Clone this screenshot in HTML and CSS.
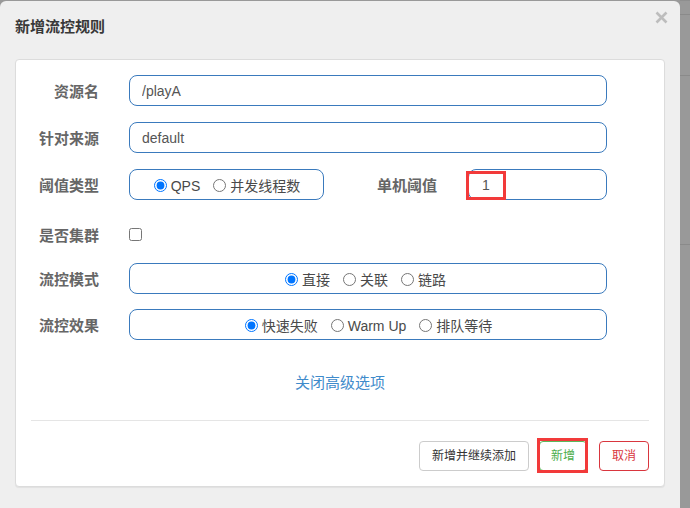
FILE: index.html
```html
<!DOCTYPE html>
<html lang="zh">
<head>
<meta charset="utf-8">
<title>新增流控规则</title>
<link rel="stylesheet" href="styles.css">
</head>
<body>
<div class="screen">
  <div class="modal">
    <div class="modal-header">
      <h4 class="modal-title">新增流控规则</h4>
      <span class="close" aria-label="关闭">
        <svg width="13" height="13" viewBox="0 0 13 13"><path d="M1.5 1.5 L11.5 11.5 M11.5 1.5 L1.5 11.5" stroke="#bdbdbd" stroke-width="2.6" stroke-linecap="butt"/></svg>
      </span>
    </div>
    <div class="panel">
      <form class="form">
        <div class="row">
          <label class="lbl">资源名</label>
          <input class="field" type="text" value="/playA">
        </div>
        <div class="row">
          <label class="lbl">针对来源</label>
          <input class="field" type="text" value="default">
        </div>
        <div class="row">
          <label class="lbl">阈值类型</label>
          <div class="group group-small">
            <label class="radio"><input type="radio" name="grade" checked>QPS</label>
            <label class="radio"><input type="radio" name="grade">并发线程数</label>
          </div>
          <label class="lbl lbl-mid">单机阈值</label>
          <div class="field-wrap">
            <input class="field" type="text" value="1">
            <span class="mark mark-input"></span>
          </div>
        </div>
        <div class="row row-check">
          <label class="lbl">是否集群</label>
          <input class="check" type="checkbox">
        </div>
        <div class="row row-tight">
          <label class="lbl">流控模式</label>
          <div class="group group-wide group-left">
            <label class="radio"><input type="radio" name="strategy" checked>直接</label>
            <label class="radio"><input type="radio" name="strategy">关联</label>
            <label class="radio"><input type="radio" name="strategy">链路</label>
          </div>
        </div>
        <div class="row">
          <label class="lbl">流控效果</label>
          <div class="group group-wide">
            <label class="radio"><input type="radio" name="behavior" checked>快速失败</label>
            <label class="radio"><input type="radio" name="behavior">Warm Up</label>
            <label class="radio"><input type="radio" name="behavior">排队等待</label>
          </div>
        </div>
      </form>
      <div class="toggle"><a class="toggle-link">关闭高级选项</a></div>
      <div class="divider"></div>
      <div class="footer">
        <button class="btn btn-default" type="button">新增并继续添加</button>
        <span class="btn-wrap">
          <button class="btn btn-success" type="button">新增</button>
          <span class="mark mark-btn"></span>
        </span>
        <button class="btn btn-danger" type="button">取消</button>
      </div>
    </div>
  </div>
  <div class="backdrop">
    <div class="bd-row bd-r1"></div>
    <div class="bd-row bd-r2"></div>
    <div class="bd-row bd-r3"></div>
  </div>
</div>
</body>
</html>
```

FILE: styles.css
```css
* { box-sizing: border-box; }

html, body {
  margin: 0;
  padding: 0;
  width: 690px;
  height: 508px;
  overflow: hidden;
  background: #999999;
  font-family: "Liberation Sans", "Noto Sans CJK SC", sans-serif;
  font-size: 14px;
  color: #333;
}

.screen {
  display: flex;
  width: 690px;
  height: 508px;
}

.modal {
  width: 680px;
  flex: none;
  margin-top: 1px;
  height: 507px;
  background: #efefef;
  border-radius: 6px 6px 0 0;
}

.modal-header {
  display: flex;
  justify-content: space-between;
  align-items: flex-start;
  height: 58px;
  padding: 0 12px 0 15px;
}

.modal-title {
  margin: 17px 0 0 0;
  font-size: 15px;
  line-height: 18px;
  font-weight: bold;
  color: #383838;
}

.close {
  display: block;
  margin-top: 10px;
  width: 13px;
  height: 13px;
}
.close svg { display: block; }

.panel {
  width: 650px;
  margin-left: 15px;
  background: #fff;
  border: 1px solid #dcdcdc;
  border-radius: 4px;
  box-shadow: 0 1px 1px rgba(0,0,0,0.06);
  padding-bottom: 15px;
}

.form {
  padding: 15px 57px 0 0;
  margin: 0;
}

.row {
  display: flex;
  align-items: center;
  height: 31px;
  margin-bottom: 16px;
}
.row-tight { margin-bottom: 15px; }
.row:last-child { margin-bottom: 0; }

.lbl {
  width: 83px;
  flex: none;
  margin-right: 30px;
  text-align: right;
  font-size: 15px;
  font-weight: bold;
  color: #666;
  line-height: 20px;
  padding-top: 2px;
}

.lbl-mid {
  width: 113px;
  margin-right: 31px;
}

.field {
  flex: 1;
  min-width: 0;
  height: 31px;
  border: 1px solid #3a7abd;
  border-radius: 8px;
  padding: 0 12px;
  font-family: "Liberation Sans", "Noto Sans CJK SC", sans-serif;
  font-size: 14px;
  color: #555;
  background: #fff;
  outline: none;
}

.field-wrap {
  flex: 1;
  display: flex;
  position: relative;
  height: 31px;
}
.field-wrap .field { width: 100%; padding-left: 13px; }

.group {
  height: 31px;
  border: 1px solid #3a7abd;
  border-radius: 8px;
  display: flex;
  align-items: center;
  justify-content: center;
  background: #fff;
  padding-top: 2px;
}
.group-small { width: 195px; flex: none; }
.group-wide { flex: 1; }
.group-left { padding-right: 6px; }

.radio {
  display: inline-flex;
  align-items: center;
  font-size: 14px;
  color: #4a4a4a;
  margin: 0 6px 0 7px;
  line-height: 20px;
}
.radio input {
  width: 13px;
  height: 13px;
  margin: 0 4px 0 0;
}

.row-check {
  padding-top: 6px;
}
.check {
  width: 13px;
  height: 13px;
  margin: 0;
}

.toggle {
  text-align: center;
  margin-top: 33px;
  line-height: 20px;
}
.toggle-link {
  font-size: 15px;
  color: #3f8bcb;
  cursor: pointer;
}

.divider {
  height: 1px;
  background: #e5e5e5;
  margin: 27px 15px 0 15px;
}

.footer {
  display: flex;
  justify-content: flex-end;
  align-items: center;
  padding: 20px 15px 0 0;
}

.btn {
  height: 30px;
  padding: 0;
  font-family: "Liberation Sans", "Noto Sans CJK SC", sans-serif;
  font-size: 12px;
  background: #fff;
  border-radius: 4px;
  border: 1px solid #ccc;
  line-height: 28px;
}
.btn-default { color: #333; width: 110px; }
.btn-success { color: #4cae4c; border-color: #5cb85c; width: 48px; }
.btn-danger { color: #d9363e; border-color: #d9363e; width: 50px; }

.btn-wrap {
  position: relative;
  display: block;
  margin: 0 12px 0 10px;
  height: 30px;
}
.btn-wrap .btn { display: block; }

.mark {
  position: absolute;
  border: 3px solid #f23a3a;
  pointer-events: none;
}
.mark-input {
  left: -2px;
  top: 2px;
  width: 40px;
  height: 29px;
}
.mark-btn {
  left: -2px;
  top: -3px;
  width: 51px;
  height: 35px;
}

.backdrop {
  flex: 1;
  background: #999999;
  border-top: 1px solid #8e8e8e;
}
.bd-row { border-bottom: 1px solid #8a8a8a; }
.bd-r1 { height: 14px; }
.bd-r2 { height: 61px; }
.bd-r3 { height: 169px; }
```
